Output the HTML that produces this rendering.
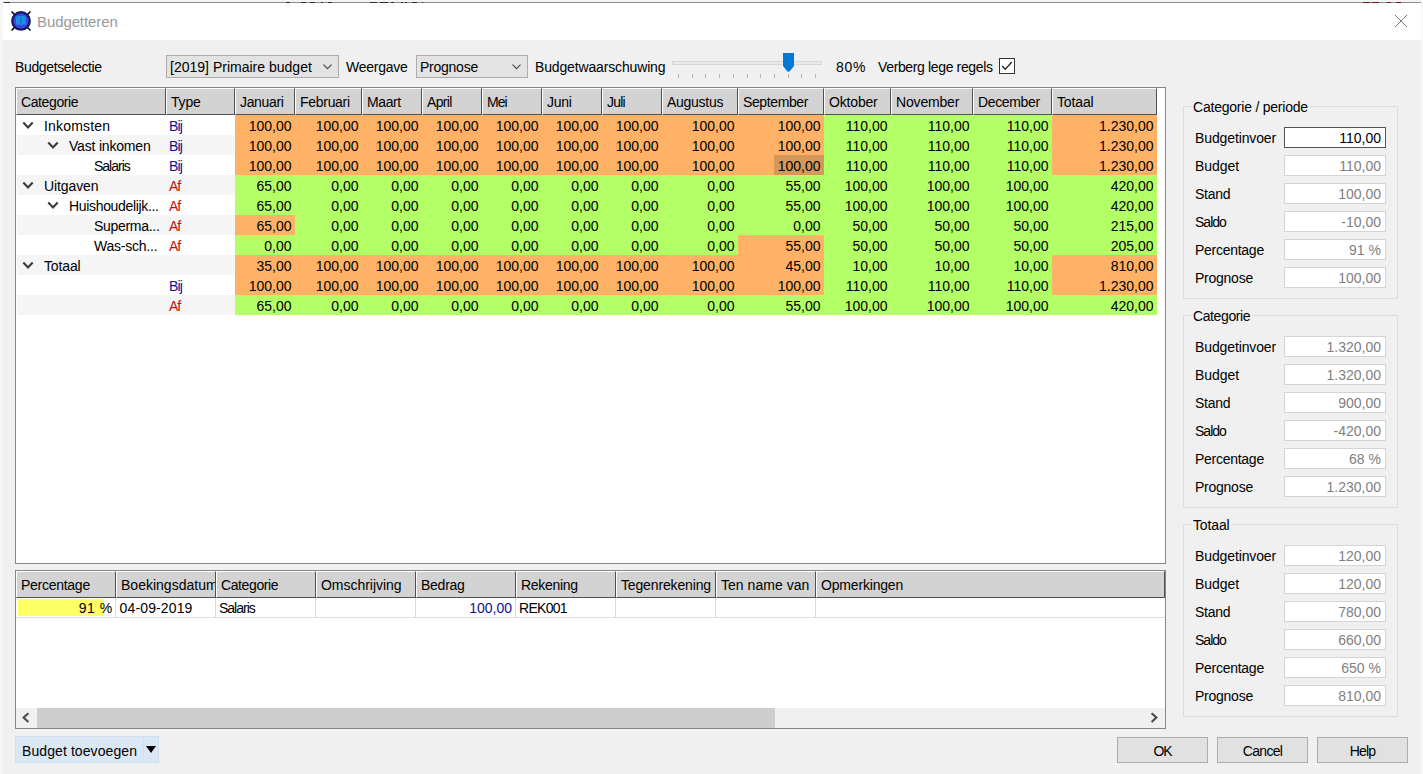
<!DOCTYPE html>
<html lang="nl"><head><meta charset="utf-8"><title>Budgetteren</title>
<style>
html,body{margin:0;padding:0}
body{width:1423px;height:774px;position:relative;overflow:hidden;background:#f0f0f0;font-family:"Liberation Sans",sans-serif;font-size:14px;color:#000;}
.a{position:absolute;white-space:nowrap}
.t{position:absolute;white-space:nowrap;line-height:20px;height:20px}
.hd{position:absolute;background:#d3d3d3;border-top:1px solid #fff;border-left:1px solid #fff;border-right:1px solid #505050;border-bottom:1px solid #505050;box-sizing:border-box;line-height:27px;padding-left:4px;white-space:nowrap;overflow:hidden}
.c{position:absolute;height:20px;line-height:20px;text-align:right;box-sizing:border-box;padding-right:3.5px;padding-top:1px;white-space:nowrap}
.O{background:#ffb266}.G{background:#b2ff66}.S{background:#d4985c}
.bij{color:#10108e}.af{color:#be1010}
.gb{position:absolute;border:1px solid #dcdcdc;box-sizing:border-box}
.gt{position:absolute;background:#f0f0f0;padding:0 2px;line-height:16px;white-space:nowrap}
.f{position:absolute;background:#fff;border:1px solid #d4d4d4;box-sizing:border-box;height:21px;line-height:20px;text-align:right;padding-right:4px;color:#808080;white-space:nowrap}
.btn{position:absolute;box-sizing:border-box;background:#e1e1e1;border:1px solid #adadad;text-align:center;line-height:26px;height:26px;white-space:nowrap}
.combo{position:absolute;box-sizing:border-box;background:#e3e3e3;border:1px solid #adadad;height:23px;line-height:23px;padding-left:3px;white-space:nowrap}
</style></head><body>

<div class="a" style="left:0;top:0;width:1423px;height:2px;background:#f4f4f4"></div>
<div class="a" style="left:0;top:0;width:3px;height:774px;background:#f6f6f6"></div>
<div class="a" style="left:1421px;top:0;width:2px;height:774px;background:#f8f8f8"></div>
<div class="a" style="left:3px;top:2px;width:1418px;height:1px;background:#8c8c8c"></div>
<div class="a" style="left:4px;top:2px;width:6px;height:1px;background:#2a2a2a"></div>
<div class="a" style="left:286px;top:2px;width:4px;height:1px;background:#2a2a2a"></div>
<div class="a" style="left:301px;top:2px;width:5px;height:1px;background:#2a2a2a"></div>
<div class="a" style="left:310px;top:2px;width:5px;height:1px;background:#2a2a2a"></div>
<div class="a" style="left:321px;top:2px;width:2px;height:1px;background:#2a2a2a"></div>
<div class="a" style="left:328px;top:2px;width:4px;height:1px;background:#2a2a2a"></div>
<div class="a" style="left:370px;top:2px;width:7px;height:1px;background:#2a2a2a"></div>
<div class="a" style="left:380px;top:2px;width:8px;height:1px;background:#2a2a2a"></div>
<div class="a" style="left:391px;top:2px;width:3px;height:1px;background:#2a2a2a"></div>
<div class="a" style="left:401px;top:2px;width:2px;height:1px;background:#2a2a2a"></div>
<div class="a" style="left:405px;top:2px;width:2px;height:1px;background:#2a2a2a"></div>
<div class="a" style="left:412px;top:2px;width:5px;height:1px;background:#2a2a2a"></div>
<div class="a" style="left:422px;top:2px;width:1px;height:1px;background:#2a2a2a"></div>
<div class="a" style="left:1363px;top:2px;width:7px;height:1px;background:#6a1c1c"></div>
<div class="a" style="left:1372px;top:2px;width:7px;height:1px;background:#6a1c1c"></div>
<div class="a" style="left:1387px;top:2px;width:4px;height:1px;background:#6a1c1c"></div>
<div class="a" style="left:1396px;top:2px;width:5px;height:1px;background:#6a1c1c"></div>
<div class="a" style="left:3px;top:3px;width:1418px;height:37px;background:#fff"></div>
<svg class="a" style="left:10px;top:10px" width="22" height="22" viewBox="0 0 22 22"><path d="M2 2 L20 20 M20 2 L2 20" stroke="#0a0a14" stroke-width="1.7" stroke-linecap="round"/><circle cx="11" cy="10.9" r="9.9" fill="#17175f"/><circle cx="11" cy="10.9" r="7.6" fill="#3a48dc"/><rect x="6" y="6" width="9.6" height="8.8" rx="1.2" fill="#1c8ee6"/><rect x="10.4" y="7.2" width="1.2" height="6.6" fill="#1c60d2"/></svg>
<div class="a" style="left:37px;top:12px;font-size:15px;letter-spacing:-0.1px;line-height:20px;color:#999">Budgetteren</div>
<svg class="a" style="left:1394px;top:14px" width="14" height="14" viewBox="0 0 14 14"><path d="M1 1 L13 13 M13 1 L1 13" stroke="#777" stroke-width="1" fill="none"/></svg>
<div class="t" style="left:15px;top:57px"><span style="letter-spacing:-0.36px">Budgetselectie</span></div>
<div class="combo" style="left:166px;top:55px;width:173px"><span style="letter-spacing:0.01px">[2019] Primaire budget</span></div>
<svg class="a" style="left:323px;top:64px" width="9" height="6" viewBox="0 0 9 6"><path d="M0.5 0.6 L4.5 4.6 L8.5 0.6" stroke="#4a4a4a" stroke-width="1.2" fill="none"/></svg>
<div class="t" style="left:346px;top:57px"><span style="letter-spacing:-0.25px">Weergave</span></div>
<div class="combo" style="left:416px;top:55px;width:112px"><span style="letter-spacing:-0.25px">Prognose</span></div>
<svg class="a" style="left:512px;top:64px" width="9" height="6" viewBox="0 0 9 6"><path d="M0.5 0.6 L4.5 4.6 L8.5 0.6" stroke="#4a4a4a" stroke-width="1.2" fill="none"/></svg>
<div class="t" style="left:535px;top:57px"><span style="letter-spacing:-0.15px">Budgetwaarschuwing</span></div>
<div class="a" style="left:672px;top:61px;width:150px;height:4px;box-sizing:border-box;background:#e7eaea;border:1px solid #d6d6d6"></div>
<div class="a" style="left:678px;top:74px;width:1px;height:4px;background:#b4b4b4"></div>
<div class="a" style="left:692px;top:74px;width:1px;height:4px;background:#b4b4b4"></div>
<div class="a" style="left:705px;top:74px;width:1px;height:4px;background:#b4b4b4"></div>
<div class="a" style="left:719px;top:74px;width:1px;height:4px;background:#b4b4b4"></div>
<div class="a" style="left:733px;top:74px;width:1px;height:4px;background:#b4b4b4"></div>
<div class="a" style="left:747px;top:74px;width:1px;height:4px;background:#b4b4b4"></div>
<div class="a" style="left:760px;top:74px;width:1px;height:4px;background:#b4b4b4"></div>
<div class="a" style="left:774px;top:74px;width:1px;height:4px;background:#b4b4b4"></div>
<div class="a" style="left:788px;top:74px;width:1px;height:4px;background:#b4b4b4"></div>
<div class="a" style="left:801px;top:74px;width:1px;height:4px;background:#b4b4b4"></div>
<div class="a" style="left:815px;top:74px;width:1px;height:4px;background:#b4b4b4"></div>
<svg class="a" style="left:783px;top:53px" width="11" height="19" viewBox="0 0 11 19"><path d="M0 0 H11 V13 L7.2 17.8 Q5.5 19.6 3.8 17.8 L0 13 Z" fill="#0078d7"/></svg>
<div class="t" style="left:836px;top:57px"><span style="letter-spacing:0.71px">80%</span></div>
<div class="t" style="left:878px;top:57px"><span style="letter-spacing:-0.36px">Verberg lege regels</span></div>
<div class="a" style="left:999px;top:58px;width:16px;height:16px;box-sizing:border-box;background:#fff;border:1px solid #333"></div>
<svg class="a" style="left:999px;top:58px" width="16" height="16" viewBox="0 0 16 16"><path d="M3.2 8 L6.3 11.2 L12.8 4" stroke="#222" stroke-width="1.3" fill="none"/></svg>
<div class="a" style="left:15px;top:87px;width:1151px;height:477px;box-sizing:border-box;background:#fff;border:1px solid #828790"></div>
<div class="hd" style="left:16px;top:88px;width:150px;height:27px"><span style="letter-spacing:-0.39px">Categorie</span></div>
<div class="hd" style="left:166px;top:88px;width:69px;height:27px"><span style="letter-spacing:-0.19px">Type</span></div>
<div class="hd" style="left:235px;top:88px;width:60px;height:27px"><span style="letter-spacing:-0.35px">Januari</span></div>
<div class="hd" style="left:295px;top:88px;width:67px;height:27px"><span style="letter-spacing:-0.29px">Februari</span></div>
<div class="hd" style="left:362px;top:88px;width:60px;height:27px"><span style="letter-spacing:-0.40px">Maart</span></div>
<div class="hd" style="left:422px;top:88px;width:60px;height:27px"><span style="letter-spacing:-0.65px">April</span></div>
<div class="hd" style="left:482px;top:88px;width:60px;height:27px"><span style="letter-spacing:-0.92px">Mei</span></div>
<div class="hd" style="left:542px;top:88px;width:60px;height:27px"><span style="letter-spacing:-0.29px">Juni</span></div>
<div class="hd" style="left:602px;top:88px;width:60px;height:27px"><span style="letter-spacing:-0.80px">Juli</span></div>
<div class="hd" style="left:662px;top:88px;width:76px;height:27px"><span style="letter-spacing:-0.27px">Augustus</span></div>
<div class="hd" style="left:738px;top:88px;width:86px;height:27px"><span style="letter-spacing:-0.38px">September</span></div>
<div class="hd" style="left:824px;top:88px;width:67px;height:27px"><span style="letter-spacing:-0.17px">Oktober</span></div>
<div class="hd" style="left:891px;top:88px;width:82px;height:27px"><span style="letter-spacing:-0.17px">November</span></div>
<div class="hd" style="left:973px;top:88px;width:79px;height:27px"><span style="letter-spacing:-0.35px">December</span></div>
<div class="hd" style="left:1052px;top:88px;width:105px;height:27px"><span style="letter-spacing:-0.13px">Totaal</span></div>
<div class="a" style="left:17px;top:115px;width:218px;height:20px;background:#fff"></div>
<svg class="a" style="left:21.5px;top:121px" width="12" height="9" viewBox="0 0 12 9"><path d="M1.3 1.5 L6 6.4 L10.7 1.5" stroke="#3c3c3c" stroke-width="2.2" fill="none"/></svg>
<div class="t" style="left:44px;top:116px"><span style="letter-spacing:0.18px">Inkomsten</span></div>
<div class="t bij" style="left:169px;top:116px"><span style="letter-spacing:-0.82px">Bij</span></div>
<div class="c O" style="left:235px;top:115px;width:60px">100,00</div>
<div class="c O" style="left:295px;top:115px;width:67px">100,00</div>
<div class="c O" style="left:362px;top:115px;width:60px">100,00</div>
<div class="c O" style="left:422px;top:115px;width:60px">100,00</div>
<div class="c O" style="left:482px;top:115px;width:60px">100,00</div>
<div class="c O" style="left:542px;top:115px;width:60px">100,00</div>
<div class="c O" style="left:602px;top:115px;width:60px">100,00</div>
<div class="c O" style="left:662px;top:115px;width:76px">100,00</div>
<div class="c O" style="left:738px;top:115px;width:86px">100,00</div>
<div class="c G" style="left:824px;top:115px;width:67px">110,00</div>
<div class="c G" style="left:891px;top:115px;width:82px">110,00</div>
<div class="c G" style="left:973px;top:115px;width:79px">110,00</div>
<div class="c O" style="left:1052px;top:115px;width:105px">1.230,00</div>
<div class="a" style="left:17px;top:135px;width:218px;height:20px;background:#f5f5f5"></div>
<svg class="a" style="left:46.5px;top:141px" width="12" height="9" viewBox="0 0 12 9"><path d="M1.3 1.5 L6 6.4 L10.7 1.5" stroke="#3c3c3c" stroke-width="2.2" fill="none"/></svg>
<div class="t" style="left:69px;top:136px"><span style="letter-spacing:-0.19px">Vast inkomen</span></div>
<div class="t bij" style="left:169px;top:136px"><span style="letter-spacing:-0.82px">Bij</span></div>
<div class="c O" style="left:235px;top:135px;width:60px">100,00</div>
<div class="c O" style="left:295px;top:135px;width:67px">100,00</div>
<div class="c O" style="left:362px;top:135px;width:60px">100,00</div>
<div class="c O" style="left:422px;top:135px;width:60px">100,00</div>
<div class="c O" style="left:482px;top:135px;width:60px">100,00</div>
<div class="c O" style="left:542px;top:135px;width:60px">100,00</div>
<div class="c O" style="left:602px;top:135px;width:60px">100,00</div>
<div class="c O" style="left:662px;top:135px;width:76px">100,00</div>
<div class="c O" style="left:738px;top:135px;width:86px">100,00</div>
<div class="c G" style="left:824px;top:135px;width:67px">110,00</div>
<div class="c G" style="left:891px;top:135px;width:82px">110,00</div>
<div class="c G" style="left:973px;top:135px;width:79px">110,00</div>
<div class="c O" style="left:1052px;top:135px;width:105px">1.230,00</div>
<div class="a" style="left:17px;top:155px;width:218px;height:20px;background:#fff"></div>
<div class="t" style="left:94px;top:156px"><span style="letter-spacing:-1.00px">Salaris</span></div>
<div class="t bij" style="left:169px;top:156px"><span style="letter-spacing:-0.82px">Bij</span></div>
<div class="c O" style="left:235px;top:155px;width:60px">100,00</div>
<div class="c O" style="left:295px;top:155px;width:67px">100,00</div>
<div class="c O" style="left:362px;top:155px;width:60px">100,00</div>
<div class="c O" style="left:422px;top:155px;width:60px">100,00</div>
<div class="c O" style="left:482px;top:155px;width:60px">100,00</div>
<div class="c O" style="left:542px;top:155px;width:60px">100,00</div>
<div class="c O" style="left:602px;top:155px;width:60px">100,00</div>
<div class="c O" style="left:662px;top:155px;width:76px">100,00</div>
<div class="c O" style="left:738px;top:155px;width:86px"></div>
<div class="c S" style="left:774px;top:155px;width:50px">100,00</div>
<div class="c G" style="left:824px;top:155px;width:67px">110,00</div>
<div class="c G" style="left:891px;top:155px;width:82px">110,00</div>
<div class="c G" style="left:973px;top:155px;width:79px">110,00</div>
<div class="c O" style="left:1052px;top:155px;width:105px">1.230,00</div>
<div class="a" style="left:17px;top:175px;width:218px;height:20px;background:#f5f5f5"></div>
<svg class="a" style="left:21.5px;top:181px" width="12" height="9" viewBox="0 0 12 9"><path d="M1.3 1.5 L6 6.4 L10.7 1.5" stroke="#3c3c3c" stroke-width="2.2" fill="none"/></svg>
<div class="t" style="left:44px;top:176px"><span style="letter-spacing:-0.11px">Uitgaven</span></div>
<div class="t af" style="left:169px;top:176px"><span style="letter-spacing:-1.00px">Af</span></div>
<div class="c G" style="left:235px;top:175px;width:60px">65,00</div>
<div class="c G" style="left:295px;top:175px;width:67px">0,00</div>
<div class="c G" style="left:362px;top:175px;width:60px">0,00</div>
<div class="c G" style="left:422px;top:175px;width:60px">0,00</div>
<div class="c G" style="left:482px;top:175px;width:60px">0,00</div>
<div class="c G" style="left:542px;top:175px;width:60px">0,00</div>
<div class="c G" style="left:602px;top:175px;width:60px">0,00</div>
<div class="c G" style="left:662px;top:175px;width:76px">0,00</div>
<div class="c G" style="left:738px;top:175px;width:86px">55,00</div>
<div class="c G" style="left:824px;top:175px;width:67px">100,00</div>
<div class="c G" style="left:891px;top:175px;width:82px">100,00</div>
<div class="c G" style="left:973px;top:175px;width:79px">100,00</div>
<div class="c G" style="left:1052px;top:175px;width:105px">420,00</div>
<div class="a" style="left:17px;top:195px;width:218px;height:20px;background:#fff"></div>
<svg class="a" style="left:46.5px;top:201px" width="12" height="9" viewBox="0 0 12 9"><path d="M1.3 1.5 L6 6.4 L10.7 1.5" stroke="#3c3c3c" stroke-width="2.2" fill="none"/></svg>
<div class="t" style="left:69px;top:196px"><span style="letter-spacing:-0.33px">Huishoudelijk...</span></div>
<div class="t af" style="left:169px;top:196px"><span style="letter-spacing:-1.00px">Af</span></div>
<div class="c G" style="left:235px;top:195px;width:60px">65,00</div>
<div class="c G" style="left:295px;top:195px;width:67px">0,00</div>
<div class="c G" style="left:362px;top:195px;width:60px">0,00</div>
<div class="c G" style="left:422px;top:195px;width:60px">0,00</div>
<div class="c G" style="left:482px;top:195px;width:60px">0,00</div>
<div class="c G" style="left:542px;top:195px;width:60px">0,00</div>
<div class="c G" style="left:602px;top:195px;width:60px">0,00</div>
<div class="c G" style="left:662px;top:195px;width:76px">0,00</div>
<div class="c G" style="left:738px;top:195px;width:86px">55,00</div>
<div class="c G" style="left:824px;top:195px;width:67px">100,00</div>
<div class="c G" style="left:891px;top:195px;width:82px">100,00</div>
<div class="c G" style="left:973px;top:195px;width:79px">100,00</div>
<div class="c G" style="left:1052px;top:195px;width:105px">420,00</div>
<div class="a" style="left:17px;top:215px;width:218px;height:20px;background:#f5f5f5"></div>
<div class="t" style="left:94px;top:216px"><span style="letter-spacing:-0.30px">Superma...</span></div>
<div class="t af" style="left:169px;top:216px"><span style="letter-spacing:-1.00px">Af</span></div>
<div class="c O" style="left:235px;top:215px;width:60px">65,00</div>
<div class="c G" style="left:295px;top:215px;width:67px">0,00</div>
<div class="c G" style="left:362px;top:215px;width:60px">0,00</div>
<div class="c G" style="left:422px;top:215px;width:60px">0,00</div>
<div class="c G" style="left:482px;top:215px;width:60px">0,00</div>
<div class="c G" style="left:542px;top:215px;width:60px">0,00</div>
<div class="c G" style="left:602px;top:215px;width:60px">0,00</div>
<div class="c G" style="left:662px;top:215px;width:76px">0,00</div>
<div class="c G" style="left:738px;top:215px;width:86px">0,00</div>
<div class="c G" style="left:824px;top:215px;width:67px">50,00</div>
<div class="c G" style="left:891px;top:215px;width:82px">50,00</div>
<div class="c G" style="left:973px;top:215px;width:79px">50,00</div>
<div class="c G" style="left:1052px;top:215px;width:105px">215,00</div>
<div class="a" style="left:17px;top:235px;width:218px;height:20px;background:#fff"></div>
<div class="t" style="left:94px;top:236px"><span style="letter-spacing:-0.23px">Was-sch...</span></div>
<div class="t af" style="left:169px;top:236px"><span style="letter-spacing:-1.00px">Af</span></div>
<div class="c G" style="left:235px;top:235px;width:60px">0,00</div>
<div class="c G" style="left:295px;top:235px;width:67px">0,00</div>
<div class="c G" style="left:362px;top:235px;width:60px">0,00</div>
<div class="c G" style="left:422px;top:235px;width:60px">0,00</div>
<div class="c G" style="left:482px;top:235px;width:60px">0,00</div>
<div class="c G" style="left:542px;top:235px;width:60px">0,00</div>
<div class="c G" style="left:602px;top:235px;width:60px">0,00</div>
<div class="c G" style="left:662px;top:235px;width:76px">0,00</div>
<div class="c O" style="left:738px;top:235px;width:86px">55,00</div>
<div class="c G" style="left:824px;top:235px;width:67px">50,00</div>
<div class="c G" style="left:891px;top:235px;width:82px">50,00</div>
<div class="c G" style="left:973px;top:235px;width:79px">50,00</div>
<div class="c G" style="left:1052px;top:235px;width:105px">205,00</div>
<div class="a" style="left:17px;top:255px;width:218px;height:20px;background:#f5f5f5"></div>
<svg class="a" style="left:21.5px;top:261px" width="12" height="9" viewBox="0 0 12 9"><path d="M1.3 1.5 L6 6.4 L10.7 1.5" stroke="#3c3c3c" stroke-width="2.2" fill="none"/></svg>
<div class="t" style="left:44px;top:256px"><span style="letter-spacing:-0.13px">Totaal</span></div>
<div class="c O" style="left:235px;top:255px;width:60px">35,00</div>
<div class="c O" style="left:295px;top:255px;width:67px">100,00</div>
<div class="c O" style="left:362px;top:255px;width:60px">100,00</div>
<div class="c O" style="left:422px;top:255px;width:60px">100,00</div>
<div class="c O" style="left:482px;top:255px;width:60px">100,00</div>
<div class="c O" style="left:542px;top:255px;width:60px">100,00</div>
<div class="c O" style="left:602px;top:255px;width:60px">100,00</div>
<div class="c O" style="left:662px;top:255px;width:76px">100,00</div>
<div class="c O" style="left:738px;top:255px;width:86px">45,00</div>
<div class="c G" style="left:824px;top:255px;width:67px">10,00</div>
<div class="c G" style="left:891px;top:255px;width:82px">10,00</div>
<div class="c G" style="left:973px;top:255px;width:79px">10,00</div>
<div class="c O" style="left:1052px;top:255px;width:105px">810,00</div>
<div class="a" style="left:17px;top:275px;width:218px;height:20px;background:#fff"></div>
<div class="t bij" style="left:169px;top:276px"><span style="letter-spacing:-0.82px">Bij</span></div>
<div class="c O" style="left:235px;top:275px;width:60px">100,00</div>
<div class="c O" style="left:295px;top:275px;width:67px">100,00</div>
<div class="c O" style="left:362px;top:275px;width:60px">100,00</div>
<div class="c O" style="left:422px;top:275px;width:60px">100,00</div>
<div class="c O" style="left:482px;top:275px;width:60px">100,00</div>
<div class="c O" style="left:542px;top:275px;width:60px">100,00</div>
<div class="c O" style="left:602px;top:275px;width:60px">100,00</div>
<div class="c O" style="left:662px;top:275px;width:76px">100,00</div>
<div class="c O" style="left:738px;top:275px;width:86px">100,00</div>
<div class="c G" style="left:824px;top:275px;width:67px">110,00</div>
<div class="c G" style="left:891px;top:275px;width:82px">110,00</div>
<div class="c G" style="left:973px;top:275px;width:79px">110,00</div>
<div class="c O" style="left:1052px;top:275px;width:105px">1.230,00</div>
<div class="a" style="left:17px;top:295px;width:218px;height:20px;background:#f5f5f5"></div>
<div class="t af" style="left:169px;top:296px"><span style="letter-spacing:-1.00px">Af</span></div>
<div class="c G" style="left:235px;top:295px;width:60px">65,00</div>
<div class="c G" style="left:295px;top:295px;width:67px">0,00</div>
<div class="c G" style="left:362px;top:295px;width:60px">0,00</div>
<div class="c G" style="left:422px;top:295px;width:60px">0,00</div>
<div class="c G" style="left:482px;top:295px;width:60px">0,00</div>
<div class="c G" style="left:542px;top:295px;width:60px">0,00</div>
<div class="c G" style="left:602px;top:295px;width:60px">0,00</div>
<div class="c G" style="left:662px;top:295px;width:76px">0,00</div>
<div class="c G" style="left:738px;top:295px;width:86px">55,00</div>
<div class="c G" style="left:824px;top:295px;width:67px">100,00</div>
<div class="c G" style="left:891px;top:295px;width:82px">100,00</div>
<div class="c G" style="left:973px;top:295px;width:79px">100,00</div>
<div class="c G" style="left:1052px;top:295px;width:105px">420,00</div>
<div class="a" style="left:15px;top:570px;width:1151px;height:159px;box-sizing:border-box;background:#fff;border:1px solid #828790"></div>
<div class="hd" style="left:16px;top:571px;width:100px;height:27px"><span style="letter-spacing:-0.27px">Percentage</span></div>
<div class="hd" style="left:116px;top:571px;width:100px;height:27px"><span style="letter-spacing:0.01px">Boekingsdatum</span></div>
<div class="hd" style="left:216px;top:571px;width:100px;height:27px"><span style="letter-spacing:-0.39px">Categorie</span></div>
<div class="hd" style="left:316px;top:571px;width:100px;height:27px"><span style="letter-spacing:-0.03px">Omschrijving</span></div>
<div class="hd" style="left:416px;top:571px;width:100px;height:27px"><span style="letter-spacing:-0.25px">Bedrag</span></div>
<div class="hd" style="left:516px;top:571px;width:100px;height:27px"><span style="letter-spacing:-0.31px">Rekening</span></div>
<div class="hd" style="left:616px;top:571px;width:100px;height:27px"><span style="letter-spacing:-0.15px">Tegenrekening</span></div>
<div class="hd" style="left:716px;top:571px;width:100px;height:27px"><span style="letter-spacing:0.03px">Ten name van</span></div>
<div class="hd" style="left:816px;top:571px;width:349px;height:27px"><span style="letter-spacing:-0.18px">Opmerkingen</span></div>
<div class="a" style="left:115px;top:598px;width:1px;height:20px;background:#dcdcdc"></div>
<div class="a" style="left:215px;top:598px;width:1px;height:20px;background:#dcdcdc"></div>
<div class="a" style="left:315px;top:598px;width:1px;height:20px;background:#dcdcdc"></div>
<div class="a" style="left:415px;top:598px;width:1px;height:20px;background:#dcdcdc"></div>
<div class="a" style="left:515px;top:598px;width:1px;height:20px;background:#dcdcdc"></div>
<div class="a" style="left:615px;top:598px;width:1px;height:20px;background:#dcdcdc"></div>
<div class="a" style="left:715px;top:598px;width:1px;height:20px;background:#dcdcdc"></div>
<div class="a" style="left:815px;top:598px;width:1px;height:20px;background:#dcdcdc"></div>
<div class="a" style="left:16px;top:617px;width:1149px;height:1px;background:#dcdcdc"></div>
<div class="a" style="left:18px;top:599px;width:86px;height:17px;background:#ffff66"></div>
<div class="t" style="left:16px;top:598px;width:96.6px;text-align:right"><span style="letter-spacing:0.51px">91 %</span></div>
<div class="t" style="left:119.6px;top:598px"><span style="letter-spacing:0.13px">04-09-2019</span></div>
<div class="t" style="left:219px;top:598px"><span style="letter-spacing:-1.00px">Salaris</span></div>
<div class="t bij" style="left:416px;top:598px;width:96px;text-align:right">100,00</div>
<div class="t" style="left:519px;top:598px"><span style="letter-spacing:-0.71px">REK001</span></div>
<div class="a" style="left:16px;top:708px;width:1149px;height:20px;background:#f0f0f0"></div>
<div class="a" style="left:37px;top:708px;width:738px;height:20px;background:#cdcdcd"></div>
<svg class="a" style="left:21px;top:711px" width="10" height="13" viewBox="0 0 10 13"><path d="M7.4 2.2 L2.6 6.6 L7.4 11" stroke="#4a4a4a" stroke-width="2.1" fill="none"/></svg>
<svg class="a" style="left:1149px;top:711px" width="10" height="13" viewBox="0 0 10 13"><path d="M2.6 2.2 L7.4 6.6 L2.6 11" stroke="#4a4a4a" stroke-width="2.1" fill="none"/></svg>
<div class="gb" style="left:1183px;top:106px;width:215px;height:193px"></div>
<div class="gt" style="left:1191px;top:99px"><span style="letter-spacing:-0.22px">Categorie / periode</span></div>
<div class="t" style="left:1195px;top:128px"><span style="letter-spacing:-0.12px">Budgetinvoer</span></div>
<div class="f" style="left:1284px;top:127px;width:102px;border-color:#555;color:#000">110,00</div>
<div class="t" style="left:1195px;top:156px"><span style="letter-spacing:-0.06px">Budget</span></div>
<div class="f" style="left:1284px;top:155px;width:102px">110,00</div>
<div class="t" style="left:1195px;top:184px"><span style="letter-spacing:-0.27px">Stand</span></div>
<div class="f" style="left:1284px;top:183px;width:102px">100,00</div>
<div class="t" style="left:1195px;top:212px"><span style="letter-spacing:-0.98px">Saldo</span></div>
<div class="f" style="left:1284px;top:211px;width:102px">-10,00</div>
<div class="t" style="left:1195px;top:240px"><span style="letter-spacing:-0.27px">Percentage</span></div>
<div class="f" style="left:1284px;top:239px;width:102px">91 %</div>
<div class="t" style="left:1195px;top:268px"><span style="letter-spacing:-0.25px">Prognose</span></div>
<div class="f" style="left:1284px;top:267px;width:102px">100,00</div>
<div class="gb" style="left:1183px;top:315px;width:215px;height:193px"></div>
<div class="gt" style="left:1191px;top:308px"><span style="letter-spacing:-0.39px">Categorie</span></div>
<div class="t" style="left:1195px;top:337px"><span style="letter-spacing:-0.12px">Budgetinvoer</span></div>
<div class="f" style="left:1284px;top:336px;width:102px">1.320,00</div>
<div class="t" style="left:1195px;top:365px"><span style="letter-spacing:-0.06px">Budget</span></div>
<div class="f" style="left:1284px;top:364px;width:102px">1.320,00</div>
<div class="t" style="left:1195px;top:393px"><span style="letter-spacing:-0.27px">Stand</span></div>
<div class="f" style="left:1284px;top:392px;width:102px">900,00</div>
<div class="t" style="left:1195px;top:421px"><span style="letter-spacing:-0.98px">Saldo</span></div>
<div class="f" style="left:1284px;top:420px;width:102px">-420,00</div>
<div class="t" style="left:1195px;top:449px"><span style="letter-spacing:-0.27px">Percentage</span></div>
<div class="f" style="left:1284px;top:448px;width:102px">68 %</div>
<div class="t" style="left:1195px;top:477px"><span style="letter-spacing:-0.25px">Prognose</span></div>
<div class="f" style="left:1284px;top:476px;width:102px">1.230,00</div>
<div class="gb" style="left:1183px;top:524px;width:215px;height:193px"></div>
<div class="gt" style="left:1191px;top:517px"><span style="letter-spacing:-0.13px">Totaal</span></div>
<div class="t" style="left:1195px;top:546px"><span style="letter-spacing:-0.12px">Budgetinvoer</span></div>
<div class="f" style="left:1284px;top:545px;width:102px">120,00</div>
<div class="t" style="left:1195px;top:574px"><span style="letter-spacing:-0.06px">Budget</span></div>
<div class="f" style="left:1284px;top:573px;width:102px">120,00</div>
<div class="t" style="left:1195px;top:602px"><span style="letter-spacing:-0.27px">Stand</span></div>
<div class="f" style="left:1284px;top:601px;width:102px">780,00</div>
<div class="t" style="left:1195px;top:630px"><span style="letter-spacing:-0.98px">Saldo</span></div>
<div class="f" style="left:1284px;top:629px;width:102px">660,00</div>
<div class="t" style="left:1195px;top:658px"><span style="letter-spacing:-0.27px">Percentage</span></div>
<div class="f" style="left:1284px;top:657px;width:102px">650 %</div>
<div class="t" style="left:1195px;top:686px"><span style="letter-spacing:-0.25px">Prognose</span></div>
<div class="f" style="left:1284px;top:685px;width:102px">810,00</div>
<div class="a" style="left:15px;top:736px;width:144px;height:27px;box-sizing:border-box;background:#dae8f5;border:1px solid #cde0f2"></div>
<div class="a" style="left:143px;top:737px;width:1px;height:25px;background:#cde0f2"></div>
<div class="t" style="left:22px;top:741px"><span style="letter-spacing:0.09px">Budget toevoegen</span></div>
<svg class="a" style="left:146px;top:746px" width="10" height="7" viewBox="0 0 10 7"><path d="M0 0 H10 L5 7 Z" fill="#000"/></svg>
<div class="btn" style="left:1117px;top:737px;width:91px"><span style="letter-spacing:-1.00px">OK</span></div>
<div class="btn" style="left:1217px;top:737px;width:91px"><span style="letter-spacing:-0.69px">Cancel</span></div>
<div class="btn" style="left:1317px;top:737px;width:91px"><span style="letter-spacing:-0.87px">Help</span></div>
</body></html>
